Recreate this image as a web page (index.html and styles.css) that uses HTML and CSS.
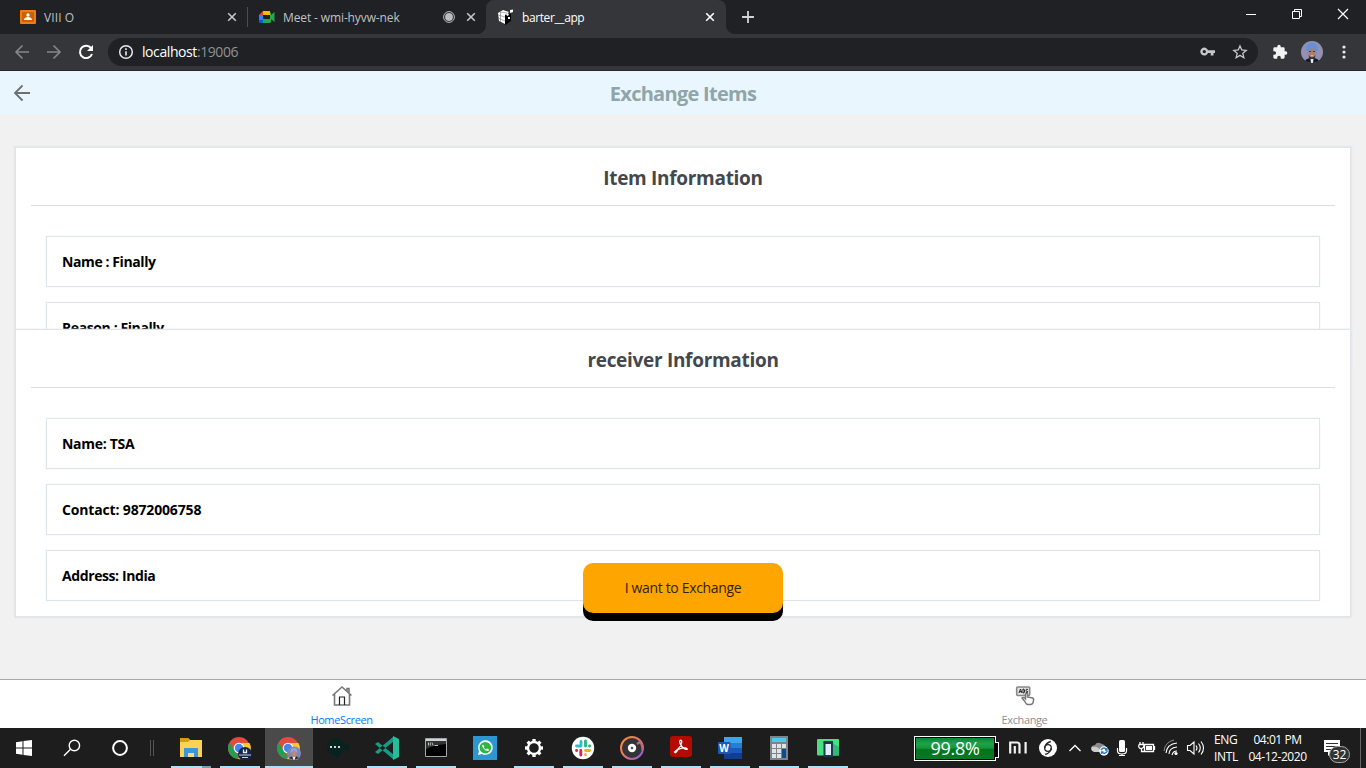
FILE: index.html
```html
<!DOCTYPE html>
<html lang="en">
<head>
<meta charset="utf-8">
<title>barter__app</title>
<link rel="stylesheet" href="styles.css">
</head>
<body>
<header class="browser">
  <div class="tabs">
    <div class="tab tab-first">
      <svg class="favicon" width="16" height="16" viewBox="0 0 16 16"><rect y="1" width="16" height="14" rx="1" fill="#ef7d14"/><rect x="2" y="3" width="12" height="10" fill="#c96208"/><circle cx="8" cy="6" r="1.700" fill="#fff"/><path d="M4 11c0-4 8-4 8 0z" fill="#fff"/></svg>
      <span class="tab-title t-viii">VIII O</span>
      <svg class="tab-close" width="10" height="10" viewBox="0 0 10 10"><path d="M1.200 1.200l7.600 7.600m0-7.600L1.200 8.800" stroke="#c3c6ca" stroke-width="1.600"/></svg>
    </div>
    <div class="tab tab-meet">
      <svg class="favicon" width="16" height="16" viewBox="0 0 16 16"><path d="M0 6l4-4v4z" fill="#ea4335"/><path d="M4 2h7v4H4z" fill="#fbbc04"/><path d="M0 6h4v5H0z" fill="#2684fc"/><path d="M0 11h4v3H1q-1 0-1-1z" fill="#1558c7"/><path d="M4 10h7v4H4zM11 3l1 1v9l-1 1zM12 6l3.500-3v10L12 10z" fill="#28a84c"/></svg>
      <span class="tab-title t-meet">Meet - wmi-hyvw-nek</span>
      <svg class="record" width="12" height="12" viewBox="0 0 12 12"><circle cx="6" cy="6" r="5.400" fill="none" stroke="#babdc1"/><circle cx="6" cy="6" r="3.900" fill="#babdc1"/></svg>
      <svg class="tab-close" width="10" height="10" viewBox="0 0 10 10"><path d="M1.200 1.200l7.600 7.600m0-7.600L1.200 8.800" stroke="#c3c6ca" stroke-width="1.600"/></svg>
    </div>
    <div class="tab tab-active">
      <svg class="favicon" width="17" height="16" viewBox="0 0 17 16"><path d="M8 4l6 1v7l-6 4z" fill="#000"/><path d="M1 4l5-3 6 2-4 3v9l-6-3z" fill="#fff"/><path d="M1 6l7 2m-7 1l7 3M3.500 3v10M3 3l7 1" stroke="#777" stroke-width=".6" fill="none"/><path d="M13 1l3-.5V3l-3 1zM9 5l2-1 1 2-2 1zM11 8h2v2h-2z" fill="#fff"/></svg>
      <span class="tab-title t-barter">barter__app</span>
      <svg class="tab-close" width="10" height="10" viewBox="0 0 10 10"><path d="M1.200 1.200l7.600 7.600m0-7.600L1.200 8.800" stroke="#fff" stroke-width="1.600"/></svg>
    </div>
    <svg class="new-tab" width="12" height="12" viewBox="0 0 12 12"><path d="M6 0v12M0 6h12" stroke="#d0d3d6" stroke-width="1.800"/></svg>
    <div class="window-controls">
      <svg width="46" height="28" viewBox="0 0 46 28"><path d="M18 14.500h10" stroke="#fff"/></svg>
      <svg width="46" height="28" viewBox="0 0 46 28"><path d="M18.500 11.500h7v7h-7zM20.500 11V9.500h7v7H26" fill="none" stroke="#fff"/></svg>
      <svg width="46" height="28" viewBox="0 0 46 28"><path d="M18 9l10 10m0-10L18 19" stroke="#fff" stroke-width="1.200"/></svg>
    </div>
  </div>
  <div class="toolbar">
    <svg width="16" height="16" viewBox="0 0 16 16"><path d="M15 8H2m6.500-6.500L2 8l6.500 6.500" fill="none" stroke="#85878a" stroke-width="1.600"/></svg>
    <svg class="forward" width="16" height="16" viewBox="0 0 16 16"><path d="M1 8h13M7.500 1.500L14 8l-6.500 6.500" fill="none" stroke="#85878a" stroke-width="1.600"/></svg>
    <svg class="reload" width="16" height="16" viewBox="0 0 16 16"><path d="M13.400 4.500A6.200 6.200 0 1 0 14 10" fill="none" stroke="#fff" stroke-width="2"/><path d="M15 1v6H9z" fill="#fff"/></svg>
    <div class="address">
      <svg width="16" height="16" viewBox="0 0 16 16"><circle cx="8" cy="8" r="6.300" fill="none" stroke="#e8eaed" stroke-width="1.500"/><path d="M8 7.200v4.200M8 4.200v1.700" stroke="#e8eaed" stroke-width="1.600"/></svg>
      <span class="url">localhost<span class="port">:19006</span></span>
      <svg class="key" width="15" height="10" viewBox="0 0 15 10"><path fill-rule="evenodd" d="M8 3.200A4 4 0 1 0 8 6h2.700v2.500h2.800V6H15V3.200zM4.300 2.900a1.700 1.700 0 1 1 0 3.400 1.700 1.700 0 0 1 0-3.400z" fill="#c6c8cb"/></svg>
      <svg class="star" width="16" height="16" viewBox="0 0 16 16"><path d="M8 1.900l1.750 4.100 4.450.4-3.400 2.900 1.050 4.400L8 11.350 4.150 13.700 5.200 9.300 1.800 6.400 6.250 6z" fill="none" stroke="#c6c8cb" stroke-width="1.300"/></svg>
    </div>
    <svg class="puzzle" width="16" height="16" viewBox="0 0 24 24"><path d="M20.500 11H19V7a2 2 0 0 0-2-2h-4V3.500a2.500 2.500 0 0 0-5 0V5H4a2 2 0 0 0-2 2v3.800h1.500a2.700 2.700 0 0 1 0 5.400H2V20c0 1.100.9 2 2 2h3.800v-1.500a2.700 2.700 0 0 1 5.400 0V22H17a2 2 0 0 0 2-2v-4h1.500a2.500 2.500 0 0 0 0-5z" fill="#f1f3f4"/></svg>
    <svg class="avatar" width="22" height="22" viewBox="0 0 22 22"><defs><clipPath id="face"><circle cx="11" cy="11" r="11"/></clipPath></defs><g clip-path="url(#face)"><path d="M0 0h22v22H0z" fill="#9290b3"/><path d="M3 22q1-5 8-5t8 5z" fill="#171b25"/><path d="M9.500 18h3l-.5 4h-2z" fill="#e8e8ee"/><ellipse cx="11" cy="12" rx="3.800" ry="5.400" fill="#a98070"/><path d="M7.500 14q3.500 5 7 0l-1 4h-5z" fill="#342c31"/><path d="M10 14.500h2" stroke="#d8b8aa"/><path d="M5 9Q5 2 11 1.500 17 2 17 9l-2 2-4-5-4 5z" fill="#648fda"/><path d="M8 10.500h2m2 0h2" stroke="#4a363a"/></g></svg>
    <svg class="menu" width="4" height="16" viewBox="0 0 4 16"><g fill="#e8eaed"><circle cx="2" cy="3" r="1.600"/><circle cx="2" cy="8" r="1.600"/><circle cx="2" cy="13" r="1.600"/></g></svg>
  </div>
</header>

<main class="app">
  <div class="app-header">
    <svg class="back" width="18" height="18" viewBox="0 0 18 18"><path d="M17 9H2m7.500-7.500L2 9l7.500 7.500" fill="none" stroke="#6b7073" stroke-width="1.800"/></svg>
    <h1 class="app-title">Exchange Items</h1>
  </div>
  <div class="content">
    <section class="card card-item">
      <h2 class="card-title title-item">Item Information</h2>
      <div class="field"><span class="wide-text">Name : Finally</span></div>
      <div class="field"><span class="wide-text">Reason : Finally</span></div>
    </section>
    <section class="card card-receiver">
      <h2 class="card-title title-receiver">receiver Information</h2>
      <div class="field"><span class="name-text">Name: TSA</span></div>
      <div class="field"><span class="contact-text">Contact: 9872006758</span></div>
      <div class="field"><span class="wide-text">Address: India</span></div>
      <button class="exchange"><span>I want to Exchange</span></button>
    </section>
  </div>
  <nav class="bottom-nav">
    <div class="nav-item nav-active">
      <svg width="22" height="22" viewBox="0 0 22 22"><path d="M1.500 10.500L11 2l9.500 8.500M3.500 9v11h15V9M16 6V3.500h2V8" fill="none" stroke="#777" stroke-width="1.600"/><path d="M8.500 20v-8h5v8" fill="none" stroke="#222" stroke-width="1.200"/></svg>
      <span>HomeScreen</span>
    </div>
    <div class="nav-item">
      <svg width="22" height="22" viewBox="0 0 22 22"><rect x="2.700" y="2" width="13" height="8.500" rx="1" fill="#e4e4e4" stroke="#888" stroke-width="1.600"/><path d="M5 8l1.500-4L8 8M5.500 6.700h2M9 4v4h.8q2-2 0-4zM14 4.500q-2-1-2 .7t1.700 1.300q.3 2-1.900 1" fill="none" stroke="#222" stroke-width="1"/><path d="M10.500 16l-2.500-3q1.500-1.500 3.500.7V9q1-1.500 2 0v3l5 1q1.500.5 1 2.500-.4 4-3 4h-3q-1 0-3-3.500z" fill="#fff" stroke="#777" stroke-width="1.500"/></svg>
      <span>Exchange</span>
    </div>
  </nav>
</main>

<footer class="taskbar">
  <div class="system">
    <svg width="48" height="40" viewBox="0 0 48 40"><path d="M16 14.200l6.500-1v6.300H16zM23.500 13l8.500-1v7.500h-8.500zM16 20.500h6.500v6.300l-6.500-1zM23.500 20.500H32V28l-8.500-1z" fill="#fff"/></svg>
    <svg width="48" height="40" viewBox="0 0 48 40"><circle cx="26.400" cy="17.500" r="5.200" fill="none" stroke="#fff" stroke-width="1.400"/><path d="M22.500 21.300L16 27.800" stroke="#fff" stroke-width="1.500"/></svg>
    <svg width="48" height="40" viewBox="0 0 48 40"><circle cx="24" cy="20" r="6.900" fill="none" stroke="#fff" stroke-width="2"/></svg>
    <svg width="22" height="40" viewBox="0 0 22 40"><path d="M6.500 12v16m3-16v16" stroke="#555"/></svg>
  </div>
  <div class="apps">
    <div class="task running multi"><svg width="24" height="24" viewBox="0 0 24 24"><path d="M1 2h8l2 2h12v17H1z" fill="#ffd257"/><path d="M1 2h8l2 2-2 2H1z" fill="#d99b14"/><path d="M5 12h14v9h-4v-4H9v4H5z" fill="#3b96dd"/><path d="M9 17h6v4H9z" fill="#f8dc7a"/></svg></div>
    <div class="task running"><svg width="24" height="24" viewBox="0 0 24 24"><circle cx="11" cy="12" r="11" fill="#e34b3e"/><path d="M1.500 6.500L8 16l3 7A11 11 0 0 1 1.500 6.500z" fill="#299c51"/><path d="M10 23l5-9-1-7h7.500A11 11 0 0 1 10 23z" fill="#fbc72d"/><circle cx="11" cy="12" r="5.300" fill="#fff"/><circle cx="11" cy="12" r="4.200" fill="#4386ef"/><circle cx="17" cy="18" r="7" fill="#15264c"/><path d="M15.500 13.500v3h3v-3" stroke="#e7edf3" stroke-width="1.300" fill="none"/><path d="M11 19h12m-9 2.500h6" stroke="#c6d0da" stroke-width="1.200"/></svg></div>
    <div class="task running current"><svg width="24" height="24" viewBox="0 0 24 24"><circle cx="11" cy="12" r="11" fill="#e34b3e"/><path d="M1.500 6.500L8 16l3 7A11 11 0 0 1 1.500 6.500z" fill="#299c51"/><path d="M10 23l5-9-1-7h7.500A11 11 0 0 1 10 23z" fill="#fbc72d"/><circle cx="11" cy="12" r="5.300" fill="#fff"/><circle cx="11" cy="12" r="4.200" fill="#4386ef"/><circle cx="17" cy="17.500" r="7" fill="#8185b5"/><path d="M12 22q5-4 10 0l-5 2z" fill="#282b38"/><ellipse cx="17" cy="18" rx="2.600" ry="3.600" fill="#b58c77"/><path d="M13.500 17q0-5 3.500-5t3.500 5l-3.500-3z" fill="#8ba8dc"/><path d="M15.500 21h3l-1 3h-1z" fill="#eee"/></svg></div>
    <div class="task"><svg width="24" height="24" viewBox="0 0 24 24"><path d="M10 2a9 9 0 1 0 0 18v2q4-2 6-5Q24 6 10 2zM18 10l5-3v9l-5-3z" fill="#08231f"/><g fill="#fff"><circle cx="5" cy="11" r="1.100"/><circle cx="9" cy="11" r="1.100"/><circle cx="13" cy="11" r="1.100"/></g></svg></div>
    <div class="task running"><svg width="24" height="24" viewBox="0 0 24 24"><path d="M0 8l3-2 16 13-1 4zM0 16l3 2L19 5l-1-4z" fill="#149c85"/><path d="M18 0l6 3v18l-6 3z" fill="#27bd9b"/></svg></div>
    <div class="task running"><svg width="24" height="24" viewBox="0 0 24 24"><path d="M1.500 2.500h21v18h-21z" fill="#000" stroke="#a3a8aa"/><path d="M2 3h20v2H2z" fill="#d1d4d5"/><path d="M2 13q8-4 20-5V5H2z" fill="#333"/><path d="M4.500 6.500v3m1.800-3v3M8 6.500l1 3m1.500 0H14" stroke="#ccc" stroke-width=".9"/></svg></div>
    <div class="task"><svg width="24" height="24" viewBox="0 0 24 24"><path d="M0 0h24v24H0z" fill="#2b96cf"/><path d="M5 19l1-4a7.300 7.300 0 1 1 3 3z" fill="#fff"/><circle cx="12.300" cy="11.700" r="5.800" fill="#2cb742"/><path d="M10 8.500q-2 1 .5 4t5 2.500l.5-1.500-2-1-1 1q-2-.7-2.200-2.200l.7-1z" fill="#fff"/></svg></div>
    <div class="task running"><svg width="24" height="24" viewBox="0 0 24 24"><circle cx="12" cy="12" r="6" fill="none" stroke="#fff" stroke-width="2.400"/><g fill="#fff"><path id="tooth" d="M10.300 3h3.400v3.500h-3.400z"/><use href="#tooth" transform="rotate(45 12 12)"/><use href="#tooth" transform="rotate(90 12 12)"/><use href="#tooth" transform="rotate(135 12 12)"/><use href="#tooth" transform="rotate(180 12 12)"/><use href="#tooth" transform="rotate(225 12 12)"/><use href="#tooth" transform="rotate(270 12 12)"/><use href="#tooth" transform="rotate(315 12 12)"/></g></svg></div>
    <div class="task running"><svg width="24" height="24" viewBox="0 0 24 24"><circle cx="12" cy="12" r="11.200" fill="#fff"/><g stroke-width="2.900" stroke-linecap="round"><path d="M10 5.500V10M5.500 10H10" stroke="#36b8d8"/><path d="M14.500 5v5M18.500 10h.2" stroke="#2eb67d"/><path d="M14.500 14.500h4.300M14.500 18.600v.2" stroke="#e8b02e"/><path d="M9.800 14.500V19M5.500 14.500h.2" stroke="#e01e5a"/></g></svg></div>
    <div class="task running"><svg width="24" height="24" viewBox="0 0 24 24"><defs><linearGradient id="ring" x1="0" y1="0" x2="1" y2="1"><stop stop-color="#ff8b29"/><stop offset=".5" stop-color="#e57373"/><stop offset="1" stop-color="#765bdc"/></linearGradient></defs><circle cx="12" cy="12" r="11" fill="#333238" stroke="url(#ring)" stroke-width="2"/><path d="M17 8l3-2q3 3 2.500 8" fill="none" stroke="#bf6a75" stroke-width="2.200"/><circle cx="12" cy="12" r="4.200" fill="#fff"/><circle cx="12" cy="12" r="1.300" fill="#555"/></svg></div>
    <div class="task running"><svg width="24" height="24" viewBox="0 0 24 24"><rect x="1" y="0" width="22" height="21" rx="3" fill="#b30b00"/><path d="M11 4.500q2-1 1.700 2Q12 11 5.500 16q1 2 3.500-2.500 4-2 8-1.500 3 2-1 1-4-2-5-6-.7-2 0-2.500z" fill="none" stroke="#fff" stroke-width="1.300"/></svg></div>
    <div class="task running"><svg width="24" height="24" viewBox="0 0 24 24"><path d="M6 1h18v6H6z" fill="#41a5ee"/><path d="M6 7h18v5H6z" fill="#2b7cd3"/><path d="M6 12h18v5H6z" fill="#185abd"/><path d="M6 17h18v6H6z" fill="#103f91"/><rect y="6" width="12.500" height="12" rx="1" fill="#1b59b5"/><text x="6.200" y="15.600" text-anchor="middle" class="word-letter">W</text></svg></div>
    <div class="task running"><svg width="24" height="24" viewBox="0 0 24 24"><path d="M3 0h18v24H3z" fill="#7c858c"/><path d="M5 2h14v4H5z" fill="#4acbed"/><path d="M5 8h4v4H5zm5 0h4v4h-4zm5 0h4v4h-4zM5 13h4v4H5zm5 0h4v4h-4zM5 18h4v4H5zm5 0h4v4h-4z" fill="#e0e2e6"/><path d="M15 13h4v9h-4z" fill="#104c8d"/></svg></div>
    <div class="task running"><svg width="24" height="24" viewBox="0 0 24 24"><rect x="1" y="3" width="22" height="16.500" rx="1" fill="#48df82"/><path d="M16 7l7 4v8.500h-7z" fill="#31b975"/><path d="M8.500 7h7.500v13H8.500z" fill="#e1edff" stroke="#173b4c" stroke-width="2"/><path d="M7.500 5H17v2H7.500z" fill="#173b4c"/></svg></div>
  </div>
  <div class="tray">
    <div class="battery"><span class="charge">99.8%</span></div>
    <svg width="38" height="40" viewBox="0 0 38 40"><path d="M12.200 25.500v-11h6.800q2.500 0 2.500 2.500v8.500M16.800 18v7.500M27.600 14v11.500" fill="none" stroke="#f2f2f2" stroke-width="2.200"/></svg>
    <svg width="26" height="40" viewBox="0 0 26 40"><circle cx="12" cy="20" r="9" fill="#fff"/><circle cx="12" cy="20" r="3.300" fill="none" stroke="#252525" stroke-width="1.300"/><path d="M8.800 20q.5-5 6-6.500M15.200 20q-.5 5-6 6.500" fill="none" stroke="#252525" stroke-width="1.300"/></svg>
    <svg width="26" height="40" viewBox="0 0 26 40"><path d="M7.500 23l5.500-5.500 5.500 5.500" fill="none" stroke="#fff" stroke-width="1.300"/></svg>
    <svg class="cloud" width="23" height="40" viewBox="0 0 23 40"><path d="M4 23q-3-5 3-6 2-4 7-1 5 1 3 7z" fill="#8b8b8b"/><path d="M4 19q7-1 9 5H6q-4-2-2-5z" fill="#ccc"/><circle cx="16" cy="23" r="4.700" fill="#fff"/><path d="M13 22q3-4 6 0m0-2v2h-2m2.500 1q-3 4-6 1m0 2v-2h2" fill="none" stroke="#257cc9" stroke-width="1.300"/></svg>
    <svg width="23" height="40" viewBox="0 0 23 40"><rect x="8" y="12" width="6" height="12" rx="1.500" fill="#fff"/><path d="M6.500 20v3q0 3 4.500 3t4.500-3v-3M11 26v2M8 27.500h6" fill="none" stroke="#fff" stroke-width="1.200"/></svg>
    <svg width="26" height="40" viewBox="0 0 26 40"><path d="M10.500 16.500h9v7h-9zM20.500 18v4M6 14v3m3-3v3M5 16.500h5q0 4-3 4t-2-4M7.500 20v3.500H10" fill="none" stroke="#fff" stroke-width="1.300"/><path d="M12 18h6v4h-6z" fill="#fff"/></svg>
    <svg width="22" height="40" viewBox="0 0 22 40"><path d="M6 25q1-9 11-10M9 26q0-6 8-7M12 27q1-4 5-4" fill="none" stroke="#fff" stroke-width="1.100"/><path d="M4 23q1-9 10-11" fill="none" stroke="#888"/><circle cx="16" cy="25.500" r="1.600" fill="#fff"/></svg>
    <svg width="25" height="40" viewBox="0 0 25 40"><path d="M5.500 17.500H8l4-3.500v12l-4-3.500H5.500zM14 17.500q2 2.500 0 5M16.500 15.500q3.500 4.500 0 9M19 13.500q5 6.500 0 13" fill="none" stroke="#fff" stroke-width="1.100"/></svg>
    <div class="lang"><span class="eng">ENG</span><span class="intl">INTL</span></div>
    <div class="clock"><span class="time">04:01 PM</span><span class="date">04-12-2020</span></div>
    <div class="notifications"><svg width="16" height="16" viewBox="0 0 16 16"><path d="M0 0h16v12H8l-4 4v-4H0z" fill="#fff"/><path d="M2 3.500h12M2 6.500h12M2 9.500h8" stroke="#333"/></svg><span class="badge">32</span></div>
  </div>
</footer>
</body>
</html>
```
FILE: styles.css
```css
* { box-sizing: border-box; }
body { margin: 0; width: 1366px; height: 768px; overflow: hidden; display: flex; flex-direction: column; font-family: "Open Sans", "Noto Sans", sans-serif; }
svg { display: block; flex: none; }
span { white-space: nowrap; }

.browser { height: 71px; flex: none; background: #202124; border-bottom: 1px solid #29272a; }
.tabs { height: 34px; display: flex; align-items: center; }
.tab { height: 34px; display: flex; align-items: center; font-size: 12px; color: #bdc1c6; }
.tab-first { width: 247px; padding: 0 10px 0 20px; }
.tab-meet { width: 239px; padding: 0 10px 0 12px; position: relative; }
.tab-meet::before { content: ""; position: absolute; left: 0; top: 7px; width: 1px; height: 20px; background: #4a4c50; }
.tab-active { width: 240px; padding: 0 11px; background: #35363a; border-radius: 8px 8px 0 0; color: #fff; position: relative; }
.tab-active::before, .tab-active::after { content: ""; position: absolute; bottom: 0; width: 8px; height: 8px; }
.tab-active::before { left: -8px; background: radial-gradient(circle at 0 0, transparent 7.500px, #35363a 8px); }
.tab-active::after { right: -8px; background: radial-gradient(circle at 100% 0, transparent 7.500px, #35363a 8px); }
.tab-title { margin-left: 8px; margin-right: auto; }
.t-viii { letter-spacing: .1px; }
.t-meet { letter-spacing: -.12px; }
.t-barter { letter-spacing: -.4px; }
.record { margin-right: 12px; position: relative; left: 1px; }
.new-tab { margin-left: 16px; }
.window-controls { display: flex; margin-left: auto; align-self: flex-start; }
.toolbar { height: 36px; background: #35363a; display: flex; align-items: center; padding: 0 20px 0 14px; }
.forward, .reload { margin-left: 16px; }
.address { margin-left: 14px; width: 1150px; height: 28px; border-radius: 14px; background: #202124; display: flex; align-items: center; padding: 0 10px; }
.url { margin-left: 8px; margin-right: auto; font-size: 14px; line-height: 18px; padding-bottom: 1px; color: #fff; letter-spacing: -.42px; }
.port { color: #8d9195; }
.star { margin-left: 17px; }
.puzzle { margin-left: 14px; }
.avatar { margin-left: 13px; }
.menu { margin-left: auto; }

.app { height: 657px; flex: none; display: flex; flex-direction: column; background: #f1f1f1; }
.app-header { height: 43px; flex: none; background: #e9f6fe; display: grid; grid-template-columns: 60px 1fr 60px; align-items: center; }
.back { margin-left: 13px; }
.app-title { margin: 3px 0 0; text-align: center; font-size: 20px; line-height: 28px; font-weight: 700; letter-spacing: -.72px; color: #90a5a9; }
.content { flex: 1; padding: 33px 15px 0; }
.card { position: relative; background: #fff; border: 1px solid #e1e5e8; box-shadow: 0 0 1px 1px #e7e8e9; padding: 15px; }
.card-item { height: 220px; }
.card-receiver { height: 288px; margin-top: -38px; box-shadow: 0 1px 1px #e3e7e9, 1px 0 1px #e7e8e9, -1px 0 1px #e7e8e9; }
.card-title { margin: 0 0 30px; height: 43px; padding-bottom: 15px; line-height: 30px; text-align: center; font-size: 19px; font-weight: 700; letter-spacing: -.3px; color: #43484d; border-bottom: 1px solid #dcdfe2; }
.field { margin: 0 15px 15px; height: 51px; padding: 0 15px; border: 1px solid #dfe5ea; box-shadow: 0 0 1px #e1e8ee; display: flex; align-items: center; font-size: 14px; font-weight: 700; color: #000; }
.wide-text { letter-spacing: -.4px; }
.name-text { letter-spacing: -.3px; }
.contact-text { letter-spacing: -.16px; }
.exchange { position: absolute; left: 567px; top: 233px; width: 200px; height: 50px; border: 0; border-radius: 10px; background: #ffa500; box-shadow: 0 8px 0 #000; font: 14px "Open Sans", sans-serif; color: #332100; padding: 0 0 1px; letter-spacing: -.33px; }
.bottom-nav { height: 49px; flex: none; background: #fff; border-top: 1px solid #a7a7aa; display: grid; grid-template-columns: 1fr 1fr; }
.nav-item { display: flex; flex-direction: column; align-items: center; padding-top: 5px; font-size: 11px; line-height: 15px; color: #8e8e93; letter-spacing: -.38px; }
.nav-item span { margin-top: 5px; }
.nav-active { color: #007aff; }

.taskbar { height: 40px; flex: none; background: #1d1d1d; display: flex; color: #fff; }
.system, .apps { display: flex; }
.task { width: 49px; height: 40px; padding-top: 8px; display: flex; flex-direction: column; align-items: center; justify-content: space-between; }
.running::after { content: ""; width: 40px; height: 2px; background: #ade0f8; }
.multi::after { background: linear-gradient(90deg, #ade0f8 31px, #789fb5 31px); }
.current { width: 48px; margin-left: 1px; background: #4a4a4a; }
.current::after { width: 48px; }
.word-letter { font: 700 10px "Open Sans", sans-serif; fill: #fff; }
.tray { margin-left: auto; width: 452px; display: flex; }
.battery { position: relative; margin-top: 8px; width: 82px; height: 25px; flex: none; border: 1px solid #fff; outline: 1px solid #000; outline-offset: -2px; background: linear-gradient(#078333, #20a24a 30%, #149538 48%, #00751c 55%, #087a25); text-align: center; line-height: 23px; font-size: 18px; letter-spacing: -.3px; }
.battery::after { content: ""; position: absolute; right: -4px; top: 5px; width: 3px; height: 14px; background: #000; border: 1px solid #fff; border-left: 0; }
.battery + svg { margin-left: 2px; }
.lang, .clock { display: flex; flex-direction: column; align-items: center; font-size: 12px; line-height: 17px; padding-top: 3px; }
.lang { width: 36px; align-items: flex-start; padding-left: 7px; letter-spacing: -.3px; }
.clock { width: 69px; letter-spacing: -.45px; }
.notifications { width: 49px; position: relative; padding: 12px 0 0 12px; border-right: 1px solid #666; }
.badge { position: absolute; left: 17px; top: 18px; width: 21px; height: 17px; border: 1px solid #aaa; border-radius: 9px; background: #333; font-size: 12px; line-height: 15px; text-align: center; letter-spacing: -.2px; }
```
